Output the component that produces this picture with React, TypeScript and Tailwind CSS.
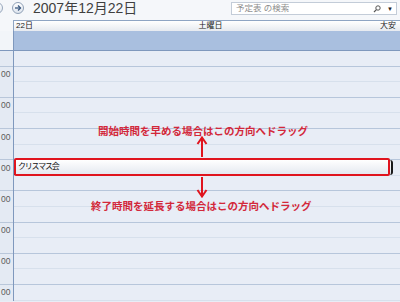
const rows = Array.from({ length: 16 }, (_, i) => i);

function ArrowUp({ down }: { down?: boolean }) {
  return (
    <svg width="12" height="22" viewBox="0 0 12 22" className={down ? "rotate-180" : ""}>
      <line x1="6" y1="21" x2="6" y2="2" stroke="#e0141e" strokeWidth="2" />
      <polyline points="1.5,8 6,1.5 10.5,8" fill="none" stroke="#e0141e" strokeWidth="2" />
    </svg>
  );
}

export default function App() {
  return (
    <div className="relative w-[400px] h-[302px] overflow-hidden bg-[#e8edf6] font-['Liberation_Sans','Noto_Sans_CJK_JP',sans-serif]">
      {/* top bar */}
      <div className="flex h-[20px] items-start bg-[#f5f7fa]">
        <div className="w-[12px] h-[20px] overflow-hidden pt-[2px]">
          <div className="ml-[-9px] w-[12px] h-[12px] rounded-full border border-[#98a7bc] bg-gradient-to-b from-white to-[#dfe6ef]" />
        </div>
        <div className="mt-[2px] flex w-[12px] h-[12px] items-center justify-center rounded-full border border-[#8fa0b6] bg-gradient-to-b from-white to-[#dde4ee]">
          <svg width="8" height="8" viewBox="0 0 8 8">
            <line x1="1" y1="4" x2="6.5" y2="4" stroke="#3d5a80" strokeWidth="1.3" />
            <polyline points="4,1.5 6.5,4 4,6.5" fill="none" stroke="#3d5a80" strokeWidth="1.3" />
          </svg>
        </div>
        <div className="ml-[9px] mt-[-1px] text-[14px] leading-[18px] text-[#3f3f3f]">2007年12月22日</div>
        <div className="ml-auto mr-[3px] mt-[2px] flex h-[13px] w-[166px] items-center border border-[#c3ccd8] bg-white pl-[4px] pr-[3px]">
          <span className="text-[8.5px] leading-none text-[#8c8c8c]">予定表 の検索</span>
          <svg width="8" height="8" viewBox="0 0 8 8" className="ml-auto">
            <circle cx="5" cy="3" r="2.2" fill="none" stroke="#555" strokeWidth="1" />
            <line x1="3.4" y1="4.6" x2="1" y2="7" stroke="#555" strokeWidth="1.2" />
          </svg>
          <span className="ml-[6px] text-[6px] leading-none text-[#222]">▼</span>
        </div>
      </div>

      {/* day header */}
      <div className="flex h-[11px]">
        <div className="w-[13px] bg-[#f5f7fa]" />
        <div className="flex flex-1 items-center justify-between border-l border-t border-[#8ea4c3] bg-gradient-to-b from-white to-[#e6eaf0] px-[2px] text-[8px] leading-none text-[#222]">
          <span>22日</span>
          <span className="ml-[8px]">土曜日</span>
          <span className="mr-[2px]">大安</span>
        </div>
      </div>

      {/* all-day band */}
      <div className="flex h-[20px] border-b border-[#7f98bd]">
        <div className="w-[13px] bg-[#f2f5f9]" />
        <div className="flex-1 border-l border-[#7f98bd] bg-[#a9bfdf]" />
      </div>

      {/* grid */}
      <div className="flex">
        <div className="w-[13px] bg-[#e4eaf3]">
          {rows.map((i) => (
            <div
              key={i}
              className={`flex h-[15.6px] items-center pl-[1px] text-[8.5px] leading-none text-[#5a5a5a] ${i % 2 === 0 ? "border-b border-[#b9c7da]" : ""}`}
            >
              {i % 2 === 1 ? <span>00</span> : null}
            </div>
          ))}
        </div>
        <div className="flex-1 border-l border-[#7f98bd]">
          {rows.map((i) => (
            <div
              key={i}
              className={`h-[15.6px] border-b ${i % 2 === 0 ? "border-[#b7c6db]" : "border-[#d7e0ec]"} ${i === 15 ? "border-[#8aa0c0]" : ""}`}
            >
              {i === 7 ? (
                <div className="flex h-full w-[379px] items-center rounded-r-[3px] border-l border-r-2 border-[#1a1a1a] bg-gradient-to-b from-white to-[#e3e7ef] pl-[3px] text-[8px] tracking-[-1.2px] leading-none text-[#111]">
                  クリスマス会
                </div>
              ) : null}
            </div>
          ))}
        </div>
      </div>

      {/* annotation */}
      <div className="absolute left-[14px] top-[158px] h-[18px] w-[376px] rounded-[2px] border-2 border-[#e0141e]" />
      <div className="absolute left-[196px] top-[136px]">
        <ArrowUp />
      </div>
      <div className="absolute left-[196px] top-[176px]">
        <ArrowUp down />
      </div>
      <div className="absolute left-[98px] top-[125px] whitespace-nowrap font-['Noto_Sans_CJK_JP',sans-serif] text-[10.5px] font-bold leading-[12px] text-[#d3283a]">
        開始時間を早める場合はこの方向へドラッグ
      </div>
      <div className="absolute left-[91px] top-[200px] whitespace-nowrap font-['Noto_Sans_CJK_JP',sans-serif] text-[10.5px] font-bold leading-[12px] text-[#d3283a]">
        終了時間を延長する場合はこの方向へドラッグ
      </div>
    </div>
  );
}
